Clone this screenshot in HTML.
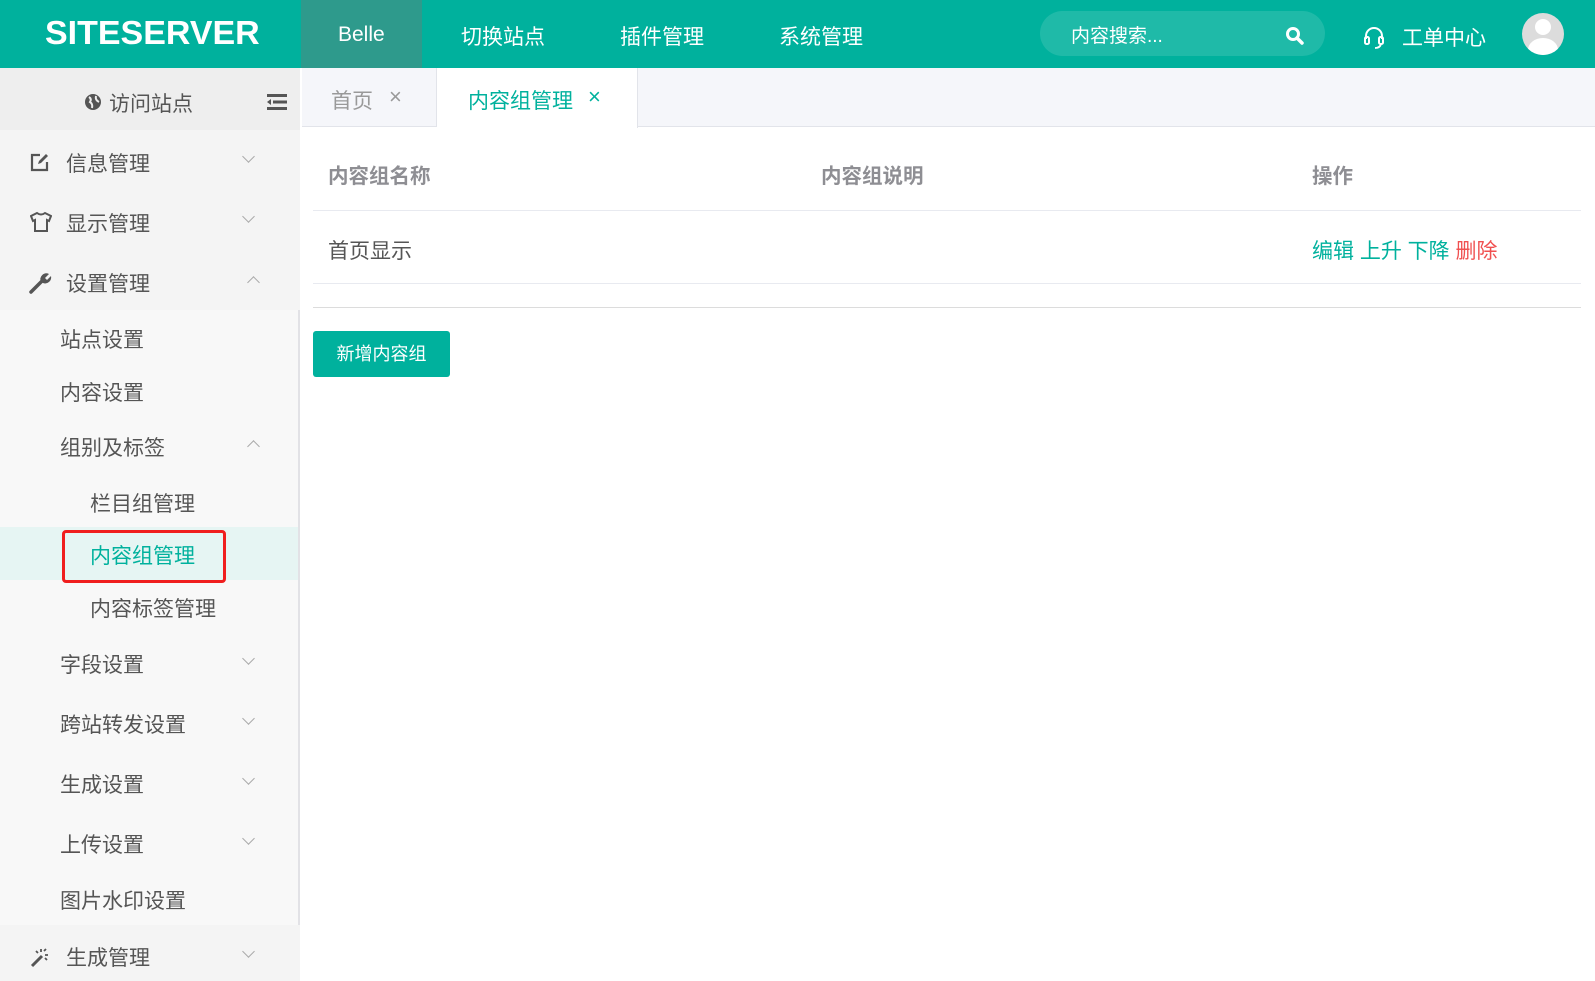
<!DOCTYPE html>
<html><head><meta charset="utf-8"><style>
*{margin:0;padding:0;box-sizing:border-box}
body{width:1595px;height:981px;overflow:hidden;background:#fff;font-family:"Liberation Sans","Noto Sans CJK SC",sans-serif;position:relative}
.a{position:absolute;white-space:nowrap}
.hdr{position:absolute;left:0;top:0;width:1595px;height:68px;background:#00b19d}
.nav{color:#fff;font-size:21px;top:21px}
.side{position:absolute;left:0;top:68px;width:300px;height:913px;background:#f8f8f8;border-right:2px solid #e2e2e6}
.si{color:#555;font-size:21px}
.chev{position:absolute;width:9px;height:9px;border-right:1.5px solid #aaa;border-bottom:1.5px solid #aaa}
.dn{transform:rotate(45deg)}
.up{transform:rotate(-135deg)}
</style></head><body>
<div class="hdr"></div>
<div class="a" style="left:45px;top:14px;color:#fff;font-size:33px;font-weight:bold;transform:scaleX(1.03);transform-origin:left">SITESERVER</div>
<div class="a" style="left:301px;top:0;width:121px;height:68px;background:#2e9a8c"></div>
<div class="a nav" style="left:338px;top:23px">Belle</div>
<div class="a nav" style="left:461px">切换站点</div>
<div class="a nav" style="left:620px">插件管理</div>
<div class="a nav" style="left:779px">系统管理</div>
<div class="a" style="left:1040px;top:11px;width:285px;height:45px;border-radius:23px;background:rgba(255,255,255,0.12)"></div>
<div class="a" style="left:1071px;top:21px;color:#fff;font-size:19px">内容搜索...</div>
<svg class="a" style="left:1285px;top:26px" width="20" height="20" viewBox="0 0 20 20"><circle cx="8" cy="8" r="5.5" fill="none" stroke="#fff" stroke-width="3"/><line x1="12" y1="12" x2="17" y2="17" stroke="#fff" stroke-width="3.5" stroke-linecap="round"/></svg>
<svg class="a" style="left:1363px;top:25px" width="22" height="24" viewBox="0 0 22 24"><path d="M3 14 V11 A8 8 0 0 1 19 11 V14" fill="none" stroke="#fff" stroke-width="2"/><rect x="2" y="12" width="4" height="7" rx="1.5" fill="none" stroke="#fff" stroke-width="2"/><rect x="16" y="12" width="4" height="7" rx="1.5" fill="none" stroke="#fff" stroke-width="2"/><path d="M18 19 Q17 23 12 23" fill="none" stroke="#fff" stroke-width="1.8"/></svg>
<div class="a" style="left:1402px;top:22px;color:#fff;font-size:21px">工单中心</div>
<div class="a" style="left:1522px;top:13px;width:42px;height:42px;border-radius:50%;background:#dcdcdc;overflow:hidden"><div class="a" style="left:13px;top:6px;width:16px;height:16px;border-radius:50%;background:#fff"></div><div class="a" style="left:6px;top:25px;width:30px;height:24px;border-radius:50%;background:#fff"></div></div>

<div class="side"></div>
<div class="a" style="left:0;top:68px;width:300px;height:62px;background:#eeeeee"></div>
<div class="a" style="left:0;top:130px;width:300px;height:180px;background:#f4f4f4"></div>
<div class="a" style="left:0;top:925px;width:300px;height:56px;background:#f4f4f4"></div>
<svg class="a" style="left:84px;top:93px" width="18" height="18" viewBox="0 0 18 18"><circle cx="9" cy="9" r="8" fill="#555"/><path d="M5 4 Q8 6 6 9 Q9 11 8 15 M12 3 Q11 7 15 9" stroke="#eee" stroke-width="2" fill="none"/></svg>
<div class="a si" style="left:109px;top:88px">访问站点</div>
<svg class="a" style="left:267px;top:94px" width="20" height="16" viewBox="0 0 20 16"><rect x="0" y="0" width="20" height="3" fill="#555"/><rect x="6" y="6.5" width="14" height="3" fill="#555"/><rect x="0" y="13" width="20" height="3" fill="#555"/><path d="M0 8 L4 5 V11 Z" fill="#555"/></svg>

<svg class="a" style="left:30px;top:152px" width="20" height="20" viewBox="0 0 20 20"><path d="M10 3 H2 V18 H17 V10" fill="none" stroke="#555" stroke-width="2.2"/><path d="M8 12 L9 9 L16 2 L18 4 L11 11 Z" fill="#555"/></svg>
<div class="a si" style="left:66px;top:148px">信息管理</div><div class="chev dn" style="left:244px;top:152px"></div>
<svg class="a" style="left:30px;top:211px" width="22" height="22" viewBox="0 0 22 22"><path d="M7 2 L1 5 L3 10 L5 9 V20 H17 V9 L19 10 L21 5 L15 2 Q11 5 7 2 Z" fill="none" stroke="#555" stroke-width="2"/></svg>
<div class="a si" style="left:66px;top:208px">显示管理</div><div class="chev dn" style="left:244px;top:212px"></div>
<svg class="a" style="left:29px;top:271px" width="24" height="24" viewBox="0 0 24 24"><path d="M2 21 L13 10" stroke="#555" stroke-width="3.5" stroke-linecap="round"/><path d="M12 11 A6 6 0 0 1 20 3 L16 7 L18 9 L22 5 A6 6 0 0 1 14 12 Z" fill="#555"/></svg>
<div class="a si" style="left:66px;top:268px">设置管理</div><div class="chev up" style="left:249px;top:278px"></div>

<div class="a si" style="left:60px;top:324px">站点设置</div>
<div class="a si" style="left:60px;top:377px">内容设置</div>
<div class="a si" style="left:60px;top:432px">组别及标签</div><div class="chev up" style="left:249px;top:442px"></div>
<div class="a si" style="left:90px;top:488px">栏目组管理</div>
<div class="a" style="left:0;top:527px;width:298px;height:53px;background:#e6f5f3"></div>
<div class="a" style="left:62px;top:530px;width:164px;height:53px;border:3px solid #f01e1e;border-radius:4px"></div>
<div class="a si" style="left:90px;top:540px;color:#00b19d">内容组管理</div>
<div class="a si" style="left:90px;top:593px">内容标签管理</div>
<div class="a si" style="left:60px;top:649px">字段设置</div><div class="chev dn" style="left:244px;top:654px"></div>
<div class="a si" style="left:60px;top:709px">跨站转发设置</div><div class="chev dn" style="left:244px;top:714px"></div>
<div class="a si" style="left:60px;top:769px">生成设置</div><div class="chev dn" style="left:244px;top:774px"></div>
<div class="a si" style="left:60px;top:829px">上传设置</div><div class="chev dn" style="left:244px;top:834px"></div>
<div class="a si" style="left:60px;top:885px">图片水印设置</div>
<svg class="a" style="left:30px;top:946px" width="24" height="22" viewBox="0 0 24 22"><path d="M2 20 L12 10" stroke="#555" stroke-width="3"/><path d="M11 3 V6 M15 9 H18 M14 5 L16 3 M8 7 L6 5 M15 12 L17 14" stroke="#555" stroke-width="1.8"/></svg>
<div class="a si" style="left:66px;top:942px">生成管理</div><div class="chev dn" style="left:244px;top:947px"></div>

<div class="a" style="left:302px;top:68px;width:1293px;height:59px;background:#f5f6fa;border-bottom:1px solid #e2e4ea"></div>
<div class="a" style="left:302px;top:68px;width:135px;height:59px;border-right:1px solid #e2e4ea"></div>
<div class="a" style="left:331px;top:85px;color:#999;font-size:21px">首页</div>
<div class="a" style="left:389px;top:84px;color:#999;font-size:22px">×</div>
<div class="a" style="left:437px;top:68px;width:201px;height:60px;background:#fff;border-right:1px solid #e2e4ea"></div>
<div class="a" style="left:468px;top:85px;color:#00b19d;font-size:21px">内容组管理</div>
<div class="a" style="left:588px;top:84px;color:#00b19d;font-size:22px">×</div>

<div class="a" style="left:328px;top:159px;color:#8e8e93;font-size:20.5px;font-weight:bold">内容组名称</div>
<div class="a" style="left:821px;top:159px;color:#8e8e93;font-size:20.5px;font-weight:bold">内容组说明</div>
<div class="a" style="left:1312px;top:159px;color:#8e8e93;font-size:20.5px;font-weight:bold">操作</div>
<div class="a" style="left:313px;top:210px;width:1268px;height:1px;background:#e8eaf0"></div>
<div class="a" style="left:328px;top:235px;color:#555;font-size:21px">首页显示</div>
<div class="a" style="left:1312px;top:235px;font-size:21px;color:#00b19d">编辑 上升 下降 <span style="color:#f05050">删除</span></div>
<div class="a" style="left:313px;top:283px;width:1268px;height:1px;background:#e8eaf0"></div>
<div class="a" style="left:313px;top:307px;width:1268px;height:1px;background:#dcdcdc"></div>
<div class="a" style="left:313px;top:331px;width:137px;height:46px;background:#00b19d;border-radius:3px;color:#fff;font-size:18px;text-align:center;line-height:46px">新增内容组</div>
</body></html>
